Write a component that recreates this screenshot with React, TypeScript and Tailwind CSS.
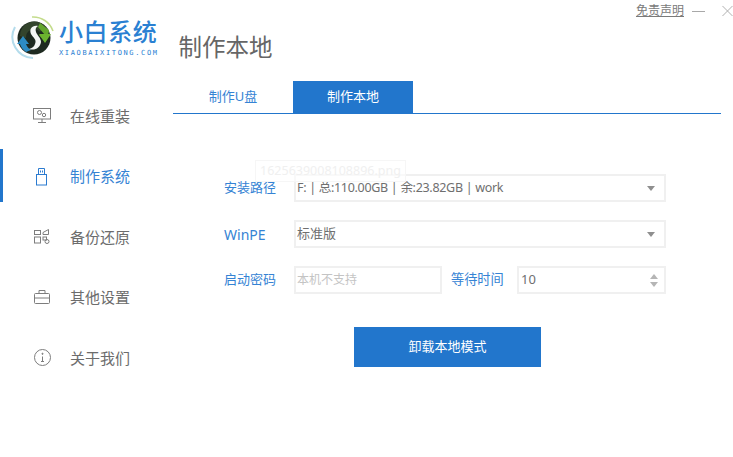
import React from "react";

const font = "font-['Noto_Sans','Noto_Sans_CJK_SC',sans-serif]";

function Logo() {
  return (
    <svg width="46" height="48" viewBox="0 0 46 48" className="shrink-0">
      <path d="M21 3 A21 21 0 0 1 42 17" fill="none" stroke="#c4dc8c" strokeWidth="1.6" />
      <path d="M4 13 A21 21 0 0 0 22 44" fill="none" stroke="#b4dcec" strokeWidth="2" />
      <circle cx="23" cy="24" r="16.5" fill="#1e2a20" />
      <path d="M9 22 A14.5 14.5 0 0 1 34 12 L29 18 A8 8 0 0 0 15 24 Z" fill="#33442c" />
      <path d="M29 9 L38 16 C38 18 37 22 34 28 L28 21 L34 21 L27 13 Z" fill="#63a62c" />
      <path d="M28 20 H40 L34 29 Z" fill="#6cb32f" />
      <path d="M6 30 L12 22 L18 30 H15 C16 33 18 35 20 36 L15 38 C12 36 10 33 9 30 Z" fill="#2d8cc4" />
      <path d="M27 12 C21 11 18 15 20 20 C22 24 26 25 24 30 C23 33 21 34 18 35 C24 37 29 34 30 28 C30 24 26 21 25 18 C24 15 25 13 27 12 Z" fill="#f4f6f4" />
    </svg>
  );
}

function MonitorIcon() {
  return (
    <svg width="18" height="16" viewBox="0 0 18 16" fill="none" stroke="#7d7d7d" strokeWidth="1">
      <rect x="0.5" y="0.5" width="17" height="10.5" />
      <circle cx="6.5" cy="4.5" r="2" />
      <circle cx="11" cy="7" r="1.7" />
      <path d="M9 11v3.5M5 14.5h8" />
    </svg>
  );
}

function UsbIcon() {
  return (
    <svg width="12" height="18" viewBox="0 0 12 18" fill="none" stroke="#2b7bd0" strokeWidth="1">
      <rect x="0.5" y="6.5" width="10" height="10.5" />
      <path d="M2.5 6.5V0.5H8.5V6.5" />
      <path d="M4.5 2.5v2M6.5 2.5v2" />
    </svg>
  );
}

function GridIcon() {
  return (
    <svg width="16" height="15" viewBox="0 0 16 15" fill="none" stroke="#7d7d7d" strokeWidth="1">
      <rect x="0.5" y="1.5" width="6" height="4" />
      <path d="M9 3.5 L14.5 0.5 V5.5 H9 Z" />
      <rect x="0.5" y="8" width="6" height="6" />
      <rect x="9" y="8" width="3.5" height="3" />
      <circle cx="13" cy="12.5" r="2" />
    </svg>
  );
}

function CaseIcon() {
  return (
    <svg width="16" height="14" viewBox="0 0 16 14" fill="none" stroke="#7d7d7d" strokeWidth="1">
      <rect x="0.5" y="3.5" width="15" height="10" rx="1" />
      <path d="M5 3.5V0.5H11V3.5M0.5 8H15.5" />
    </svg>
  );
}

function InfoIcon() {
  return (
    <svg width="17" height="17" viewBox="0 0 17 17" fill="none" stroke="#7d7d7d" strokeWidth="1">
      <circle cx="8.5" cy="8.5" r="8" />
      <path d="M8.5 7.5v5M7 12.5h3" />
      <circle cx="8.5" cy="4.8" r="0.6" fill="#7d7d7d" />
    </svg>
  );
}

const nav = [
  { label: "在线重装", icon: <MonitorIcon />, active: false },
  { label: "制作系统", icon: <UsbIcon />, active: true },
  { label: "备份还原", icon: <GridIcon />, active: false },
  { label: "其他设置", icon: <CaseIcon />, active: false },
  { label: "关于我们", icon: <InfoIcon />, active: false },
];

function Caret() {
  return <span className="w-0 h-0 border-x-[4px] border-x-transparent border-t-[5px] border-t-[#8f8f8f]" />;
}

function SelectBox({ children }: { children: React.ReactNode }) {
  return (
    <div className="flex-1 h-[28px] border-2 border-[#f0f0f0] flex items-center justify-between pl-[1px] pr-[9px] text-[13px] text-[#6f6f6f]">
      <span>{children}</span>
      <Caret />
    </div>
  );
}

export default function App() {
  return (
    <div className={`relative w-[733px] h-[457px] bg-white flex overflow-hidden ${font}`}>
      <aside className="w-[173px] shrink-0 flex flex-col">
        <div className="h-[86px] flex pl-[11px] pt-[14px] gap-[2px]">
          <Logo />
          <div className="flex flex-col pt-[3px] items-start">
            <span className="text-[24px] leading-[30px] font-medium text-[#2a80d2] tracking-[0.6px] whitespace-nowrap">小白系统</span>
            <span className="text-[7px] leading-[9px] mt-[2px] text-[#2a80d2] tracking-[1.65px] whitespace-nowrap font-['DejaVu_Sans_Mono',monospace]">XIAOBAIXITONG.COM</span>
          </div>
        </div>
        <nav className="flex flex-col">
          {nav.map((n) => (
            <div key={n.label} className="h-[60.4px] flex items-center relative">
              {n.active && <span className="absolute left-0 top-[3px] w-[3px] h-[53px] bg-[#2276cc]" />}
              <span className="w-[70px] flex justify-center pl-[16px] pr-[2px]">{n.icon}</span>
              <span className={`text-[15px] ${n.active ? "text-[#3583d4]" : "text-[#6c6c6c]"}`}>{n.label}</span>
            </div>
          ))}
        </nav>
      </aside>

      <main className="flex-1 flex flex-col min-w-0">
        <div className="h-[33px] flex justify-end items-start pt-[3px]">
          <span className="text-[12px] leading-[16px] text-[#7a7a7a] underline whitespace-nowrap">免责声明</span>
          <span className="w-[13px] h-[1px] bg-[#a8a8a8] mt-[8px] ml-[8px]" />
          <svg width="11" height="12" viewBox="0 0 12 12" className="ml-[17px] mt-[2px] shrink-0" fill="none" stroke="#a8a8a8">
            <path d="M0.5 0.5L11.5 11.5M11.5 0.5L0.5 11.5" />
          </svg>
        </div>
        <div className="h-[48px] pl-[5.5px] text-[23.5px] leading-[28px] text-[#666666] whitespace-nowrap">制作本地</div>
        <div className="w-[548px] h-[33px] flex border-b border-[#2276cc] text-[13px] shrink-0">
          <div className="w-[120px] flex items-center justify-center text-[#3583d4]">制作U盘</div>
          <div className="w-[120px] flex items-center justify-center bg-[#2276cc] text-white">制作本地</div>
        </div>

        <form className="pt-[60px] pl-[51px] w-[492.5px] flex flex-col gap-[18px] text-[13px] shrink-0">
          <div className="flex items-center h-[28px]">
            <label className="w-[70px] text-[#3583d4]">安装路径</label>
            <SelectBox><span className="text-[12.5px] tracking-[-0.3px]">F: | 总:110.00GB | 余:23.82GB | work</span></SelectBox>
          </div>
          <div className="flex items-center h-[28px]">
            <label className="w-[70px] text-[14px] text-[#3583d4]">WinPE</label>
            <SelectBox>标准版</SelectBox>
          </div>
          <div className="flex items-center h-[28px]">
            <label className="w-[70px] text-[#3583d4]">启动密码</label>
            <div className="w-[148px] h-[28px] border-2 border-[#f0f0f0] flex items-center pl-[1px] text-[12px] text-[#c4c4c4]">本机不支持</div>
            <label className="ml-[9px] w-[66px] text-[13.2px] text-[#3583d4]">等待时间</label>
            <div className="flex-1 h-[28px] border-2 border-[#f0f0f0] flex items-center justify-between pl-[2px] pr-[6px] text-[#6f6f6f]">
              <span>10</span>
              <span className="flex flex-col gap-[3px]">
                <span className="w-0 h-0 border-x-[4px] border-x-transparent border-b-[5px] border-b-[#b5b5b5]" />
                <span className="w-0 h-0 border-x-[4px] border-x-transparent border-t-[5px] border-t-[#b5b5b5]" />
              </span>
            </div>
          </div>
          <button type="button" className="mt-[15px] ml-[130px] w-[187px] h-[40px] bg-[#2276cc] text-white text-[13px]">卸载本地模式</button>
        </form>
      </main>

      <div className="absolute left-[255px] top-[160px] w-[151px] h-[22px] border border-[#f6f6f6] bg-white/60 flex items-center justify-center text-[12.5px] text-[#f0f0f0] whitespace-nowrap">1625639008108896.png</div>
    </div>
  );
}
